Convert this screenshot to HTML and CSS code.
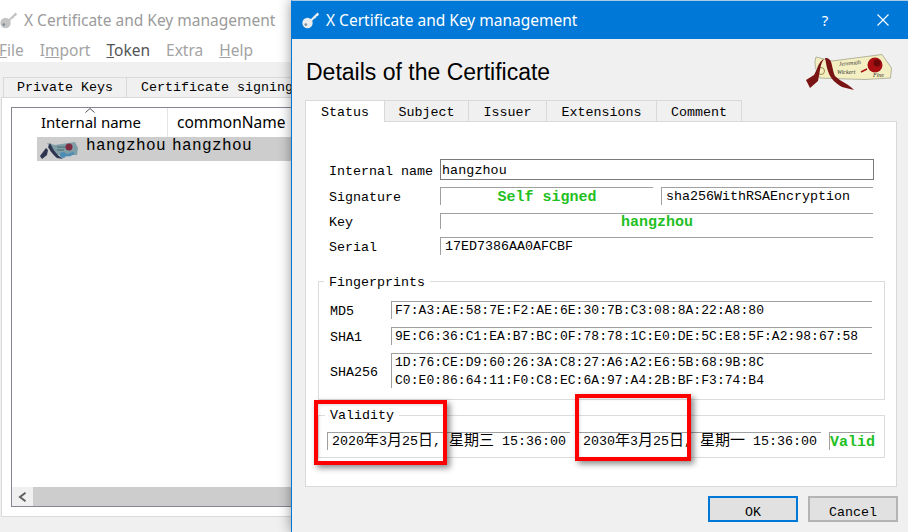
FILE: index.html
```html
<!DOCTYPE html>
<html lang="en">
<head>
<meta charset="utf-8">
<title>X Certificate and Key management</title>
<link rel="stylesheet" href="styles.css">
</head>
<body>
<svg class="defs" width="0" height="0" aria-hidden="true">
  <defs>
    <symbol id="key" viewBox="0 0 18 18">
      <path d="M7.5 9.5 L15.5 1.5 L17 3 L16 5 L14.2 5.4 L14 7 L12.4 7.4 L10 10" fill="currentColor"/>
      <circle cx="5.5" cy="12" r="5.2" fill="currentColor"/>
      <circle cx="3.8" cy="13.6" r="1.3" fill="#7d8a94"/>
    </symbol>
  </defs>
</svg>

<div class="desktop">
  <section class="win-back">
    <header class="back-title">
      <svg class="key key-back"><use href="#key"/></svg>
      <span>X Certificate and Key management</span>
    </header>
    <nav class="back-menu">
      <span><u>F</u>ile</span><span>I<u>m</u>port</span><span class="menu-on"><u>T</u>oken</span><span>Extra</span><span><u>H</u>elp</span>
    </nav>
    <div class="back-body">
      <div class="back-tabs">
        <span class="back-tab">Private Keys</span>
        <span class="back-tab back-tab-wide">Certificate signing requests</span>
      </div>
      <div class="back-pane">
        <div class="list">
          <div class="list-head">
            <span class="col-name">Internal name<svg class="sort" viewBox="0 0 10 5"><path d="M.5 4.5 5 .5l4.500 4" fill="none" stroke="#555"/></svg></span>
            <span class="col-cn">commonName</span>
          </div>
          <div class="list-row">
            <svg class="row-icon" viewBox="0 0 40 20">
              <path d="M8 3 L16 5 L36 2 L39 8 L38 15 L16 15 Z" fill="#7f9ea6"/>
              <path d="M18 7 H27 M18 10 H25" stroke="#4f6b72" stroke-width="1"/>
              <circle cx="30" cy="7" r="3.500" fill="#7e2a40"/>
              <path d="M11 3 C14 8 15 13 24 19 L18 18 C12 13 11 10 9 7 Z" fill="#2f3550"/>
              <path d="M7 8 L1 16 L3 19 L8 15 L9 10 Z" fill="#2f3550"/>
              <path d="M21 15 H32 M30 15 l5 -2" stroke="#4d8db5" stroke-width="2.500" fill="none"/>
              <circle cx="24" cy="15" r="3" fill="#4d8db5"/>
            </svg>
            <span class="row-a">hangzhou</span><span class="row-b">hangzhou</span>
          </div>
          <div class="list-fill"></div>
          <div class="hscroll">
            <span class="hscroll-btn"><svg viewBox="0 0 9 10" class="hscroll-arrow"><path d="M7.500 .8 2 5l5.500 4.200" fill="none" stroke="#606060" stroke-width="2"/></svg></span>
            <span class="hscroll-track"></span>
          </div>
        </div>
      </div>
    </div>
  </section>

  <section class="dialog">
    <header class="dlg-title">
      <svg class="key key-front"><use href="#key"/></svg>
      <span class="dlg-title-text">X Certificate and Key management</span>
      <span class="dlg-help">?</span>
      <svg class="dlg-close" viewBox="0 0 12 12"><path d="M.5 .5l11 11M11.500 .5l-11 11" stroke="#fff" stroke-width="1.100" fill="none"/></svg>
    </header>
    <div class="dlg-main">
      <div class="dlg-head">
        <h1>Details of the Certificate</h1>
        <svg class="scroll-logo" viewBox="0 0 88 38">
          <path d="M11 3 L27 7 L77 .5 L86.500 14 L85.500 24 L60 25.500 L27 24.500 L15 24 C10 16 9 8 11 3 Z" fill="#f4efc2" stroke="#8a8a70" stroke-width=".6"/>
          <circle cx="16" cy="17" r="3.500" fill="none" stroke="#9a8a50" stroke-width="1"/>
          <circle cx="70" cy="11" r="7.500" fill="#a80f12"/>
          <circle cx="72" cy="9" r="3.500" fill="#6e0709"/>
          <text class="logo-text" x="34" y="12" transform="rotate(-5 34 12)">Jeremiah</text>
          <text class="logo-text" x="32" y="20">Wickert</text>
          <text class="logo-text" x="68" y="23">Fine</text>
          <path d="M56 18 l6 -3" stroke="#a80f12" stroke-width="1.500"/>
          <path d="M20 4 C28 4 26 12 30 22 C36 28 44 30 49 36 L37 33 C30 29 25 24 23 17 C21 11 21 8 20 4 Z" fill="#7a1414"/>
          <path d="M12 15 C13 11 16 6 19 5 C15 10 15 18 13 27 L5 34 L1 26 L9 21 Z" fill="#7a1414"/>
        </svg>
      </div>

      <div class="tabs">
        <span class="tab tab-on">Status</span>
        <span class="tab tab-subject">Subject</span>
        <span class="tab tab-issuer">Issuer</span>
        <span class="tab tab-ext">Extensions</span>
        <span class="tab tab-comment">Comment</span>
      </div>

      <div class="pane">
        <div class="form">
          <span class="lbl lbl-first">Internal name</span>
          <div class="input">hangzhou</div>

          <span class="lbl">Signature</span>
          <div class="sig-pair">
            <div class="ro ro-sig green">Self signed</div>
            <div class="ro ro-alg">sha256WithRSAEncryption</div>
          </div>

          <span class="lbl">Key</span>
          <div class="ro ro-key green">hangzhou</div>

          <span class="lbl">Serial</span>
          <div class="ro ro-serial">17ED7386AA0AFCBF</div>
        </div>

        <fieldset class="group group-fp">
          <legend>Fingerprints</legend>
          <div class="fp-grid">
            <span class="fp-lbl">MD5</span>
            <div class="ro fp">F7:A3:AE:58:7E:F2:AE:6E:30:7B:C3:08:8A:22:A8:80</div>
            <span class="fp-lbl">SHA1</span>
            <div class="ro fp">9E:C6:36:C1:EA:B7:BC:0F:78:78:1C:E0:DE:5C:E8:5F:A2:98:67:58</div>
            <span class="fp-lbl fp-lbl-tall">SHA256</span>
            <div class="ro fp fp-two">1D:76:CE:D9:60:26:3A:C8:27:A6:A2:E6:5B:68:9B:8C<br>C0:E0:86:64:11:F0:C8:EC:6A:97:A4:2B:BF:F3:74:B4</div>
          </div>
        </fieldset>

        <fieldset class="group group-val">
          <legend>Validity</legend>
          <div class="val-row">
            <div class="ro date">2020<i>年</i>3<i>月</i>25<i>日</i>, <i>星期三</i> 15:36:00</div>
            <div class="ro date">2030<i>年</i>3<i>月</i>25<i>日</i>, <i>星期一</i> 15:36:00</div>
            <div class="ro valid green">Valid</div>
          </div>
        </fieldset>
      </div>

      <div class="buttons">
        <button class="btn btn-ok" type="button">OK</button>
        <button class="btn" type="button">Cancel</button>
      </div>
    </div>
  </section>

  <div class="mark mark-a"></div>
  <div class="mark mark-b"></div>
</div>
</body>
</html>
```

FILE: styles.css
```css
* { box-sizing: border-box; }
html, body { margin: 0; padding: 0; overflow: hidden; }
body { background: #f0f0f0; font-family: "Liberation Mono", "Noto Sans CJK SC", monospace; font-size: 13.33px; color: #000; }
.defs { position: absolute; }
.desktop { position: relative; width: 908px; height: 532px; overflow: hidden; background: #f0f0f0; }

/* background window */
.win-back { position: absolute; left: -8px; top: 0; width: 320px; height: 532px; display: flex; flex-direction: column; }
.back-title { height: 39px; background: #fff; display: flex; align-items: center; padding-left: 8px; gap: 6px; font: 15.5px "Noto Sans", sans-serif; color: #9b9b9b; flex: none; }
.key { width: 18px; height: 18px; flex: none; }
.key-back { color: #c4c4c4; }
.back-menu { height: 23px; background: #fff; flex: none; display: flex; gap: 16px; padding-left: 7px; font: 15.5px/23px "Noto Sans", sans-serif; color: #a3a3a3; }
.menu-on { color: #555; }
.back-body { flex: 1; background: #f0f0f0; padding: 15px 0 15px 9px; display: flex; flex-direction: column; }
.back-tabs { display: flex; height: 20px; padding-left: 2px; flex: none; }
.back-tab { flex: none; width: 124px; height: 20px; line-height: 19px; text-align: center; background: #f0f0f0; border: 1px solid #d9d9d9; border-bottom: 0; white-space: nowrap; }
.back-tab-wide { width: 240px; padding-left: 14px; text-align: left; border-left: 0; }
.back-pane { flex: 1; background: #fff; border: 1px solid #d9d9d9; padding: 9px 0 9px 9px; display: flex; }
.list { flex: 1; border: 1px solid #828790; background: #fff; display: flex; flex-direction: column; }
.list-head { height: 29px; display: flex; flex: none; font: 15px/29px "Noto Sans", sans-serif; background: #fff; }
.col-name { width: 156px; padding-left: 29px; border-right: 1px solid #e5e5e5; position: relative; }
.col-cn { padding-left: 9px; font-size: 15.5px; }
.sort { position: absolute; left: 73px; top: 0; width: 10px; height: 5px; }
.list-row { margin-left: 25px; height: 24px; background: #cdcdcd; display: flex; font-size: 16px; line-height: 19px; letter-spacing: .4px; flex: none; }
.row-icon { width: 40px; height: 20px; margin: 3px 7px 0 2px; flex: none; }
.row-a { width: 86px; }
.list-fill { flex: 1; }
.hscroll { height: 19px; display: flex; flex: none; background: #cdcdcd; }
.hscroll-btn { width: 21px; background: #f0f0f0; display: flex; align-items: center; justify-content: center; }
.hscroll-arrow { width: 9px; height: 10px; }
.hscroll-track { flex: 1; }

/* dialog */
.dialog { position: absolute; left: 291px; top: 0; width: 617px; height: 532px; background: #f0f0f0; border-left: 1px solid #0078d7; border-top: 1px solid #a9c9e4; box-shadow: 0 0 12px rgba(0, 0, 0, .42); display: flex; flex-direction: column; }
.dlg-title { height: 38px; flex: none; background: #0078d7; color: #fff; display: flex; align-items: center; padding-left: 10px; font: 15.5px "Noto Sans", sans-serif; }
.key-front { color: #e9edf0; margin-right: 6px; }
.dlg-title-text { flex: 1; }
.dlg-help { width: 12px; margin-right: 46px; text-align: center; font-size: 15px; }
.dlg-close { width: 12px; height: 12px; margin-right: 19px; }
.dlg-main { flex: 1; padding: 0 10px 0 13px; display: flex; flex-direction: column; }
.dlg-head { height: 60px; display: flex; justify-content: space-between; flex: none; margin-left: 1px; }
h1 { margin: 19px 0 0; font: 400 23px/28px "Liberation Sans", sans-serif; }
.scroll-logo { width: 88px; height: 38px; margin: 15px 5px 0 0; flex: none; }
.logo-text { font: italic 6px "Liberation Serif", serif; fill: #333; }

.tabs { display: flex; height: 22px; flex: none; align-items: flex-end; padding-top: 1px; }
.tab { height: 21px; line-height: 24px; text-align: center; border: 1px solid #d9d9d9; border-bottom: 0; border-left: 0; background: #f0f0f0; }
.tab-on { width: 80px; height: 22px; line-height: 23px; background: #fff; border-left: 1px solid #d9d9d9; position: relative; z-index: 1; margin-bottom: -1px; }
.tab-subject { width: 84px; }
.tab-issuer { width: 78px; }
.tab-ext { width: 110px; }
.tab-comment { width: 85px; }

.pane { width: 592px; height: 366px; background: #fff; border: 1px solid #d9d9d9; padding: 37px 11px 0 12px; flex: none; display: flex; flex-direction: column; }
.form { display: grid; grid-template-columns: 122px 1fr; grid-template-rows: 21px 18px 18px 18px; row-gap: 7px; width: 556px; }
.lbl { padding-left: 11px; line-height: 22px; white-space: nowrap; }
.lbl-first { line-height: 25px; }
.input { height: 21px; width: 434px; border: 1px solid #7a7a7a; line-height: 22px; padding-left: 1px; white-space: nowrap; letter-spacing: .1px; font-size: 13.33px; }
.ro { border-top: 1px solid #a0a0a0; border-left: 1px solid #a0a0a0; background: #fff; white-space: nowrap; overflow: hidden; padding-left: 4px; line-height: 17px; }
.sig-pair { display: flex; gap: 8px; width: 433px; }
.ro-sig { width: 213px; text-align: center; padding: 0; line-height: 20px; }
.ro-alg { flex: 1; }
.ro-key { width: 433px; height: 16px; margin-top: 1px; text-align: center; padding: 0; line-height: 17px; overflow: visible; }
.ro-serial { width: 433px; }
.green { color: #1fc01f; font-weight: 700; font-size: 15px; }

.group { margin: 0; padding: 0; border: 1px solid #dcdcdc; min-width: 0; }
.group legend { margin-left: 5px; padding: 4px 5px 0; line-height: 14px; }
.group-fp { margin-top: 17px; height: 128px; width: 567px; padding: 11px 0 0; }
.fp-grid { display: grid; grid-template-columns: 61px 481px; grid-template-rows: 18px 18px 35px; row-gap: 8px; align-items: center; margin-left: 11px; }
.fp-lbl { padding-top: 2px; }
.fp-lbl-tall { padding-top: 4px; }
.fp { height: 100%; font-size: 13px; letter-spacing: .05px; padding-left: 3px; line-height: 18px; }
.group-val { margin-top: 7px; height: 51px; width: 567px; padding: 9px 0 0; }
.group-val legend { padding-top: 2px; margin-left: 6px; }
.val-row { display: grid; grid-template-columns: 243px 243px 46px; column-gap: 8px; height: 18px; margin-left: 8px; }
.date { padding-left: 4px; line-height: 18px; }
.date i { font-style: normal; font-size: 15px; }
.valid { padding-left: 0; line-height: 19px; }

.buttons { display: flex; gap: 10px; margin: 9px 0 0 403px; flex: none; }
.btn { width: 91px; height: 26px; padding: 6px 0 0; background: #e1e1e1; border: 2px solid #b4b4b4; font: 13.33px "Liberation Mono", monospace; color: #000; }
.btn-ok { border-color: #0078d7; }

/* red annotation boxes */
.mark { position: absolute; border: 4px solid #f00; box-shadow: 3px 3px 6px rgba(0, 0, 0, .45), inset 1px 1px 3px rgba(0, 0, 0, .15); }
.mark-a { left: 314px; top: 400px; width: 133px; height: 65px; }
.mark-b { left: 575px; top: 394px; width: 116px; height: 67px; }
```
